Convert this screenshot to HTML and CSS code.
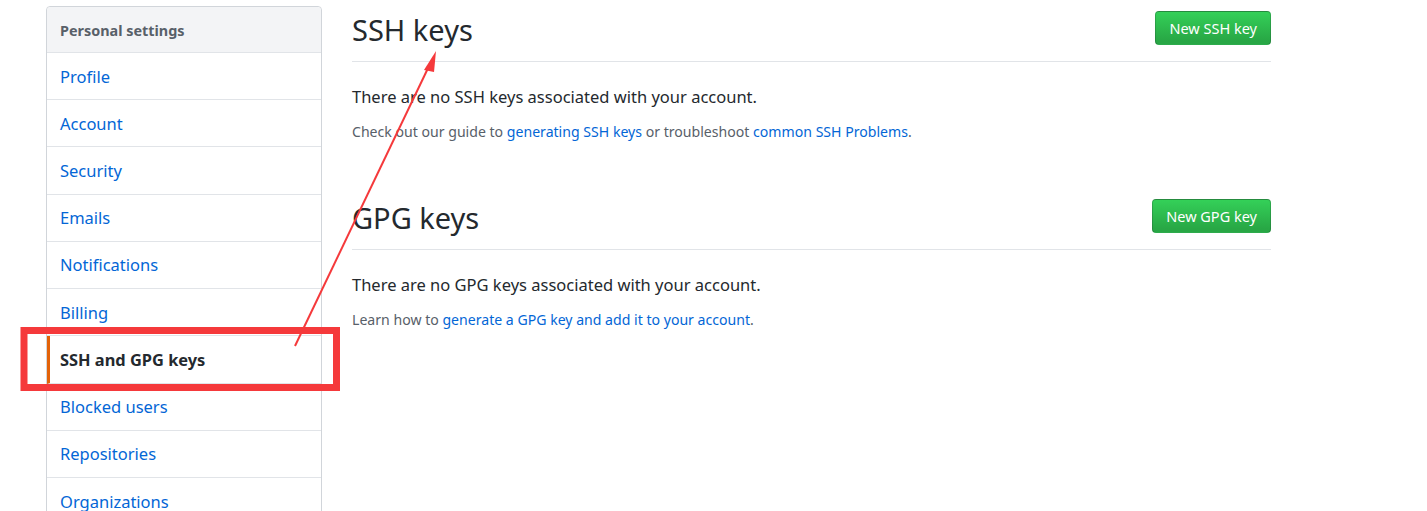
FILE: index.html
```html
<!DOCTYPE html>
<html lang="en">
<head>
<meta charset="utf-8">
<title>SSH and GPG keys</title>
<link rel="stylesheet" href="styles.css">
</head>
<body>
<div class="page">
  <nav class="menu">
    <div class="menu-heading">Personal settings</div>
    <a class="menu-item" href="#">Profile</a>
    <a class="menu-item" href="#">Account</a>
    <a class="menu-item" href="#">Security</a>
    <a class="menu-item" href="#">Emails</a>
    <a class="menu-item" href="#">Notifications</a>
    <a class="menu-item" href="#">Billing</a>
    <a class="menu-item selected" href="#">SSH and GPG keys</a>
    <a class="menu-item" href="#">Blocked users</a>
    <a class="menu-item" href="#">Repositories</a>
    <a class="menu-item" href="#">Organizations</a>
  </nav>
  <main class="content">
    <section class="keys">
      <div class="subhead">
        <h2 class="subhead-title">SSH keys</h2>
        <a class="btn" href="#">New SSH key</a>
      </div>
      <p class="blank">There are no SSH keys associated with your account.</p>
      <p class="note">Check out our guide to <a href="#">generating SSH keys</a> or troubleshoot <a href="#">common SSH Problems</a>.</p>
    </section>
    <section class="keys gpg">
      <div class="subhead">
        <h2 class="subhead-title">GPG keys</h2>
        <a class="btn" href="#">New GPG key</a>
      </div>
      <p class="blank">There are no GPG keys associated with your account.</p>
      <p class="note">Learn how to <a href="#">generate a GPG key and add it to your account</a>.</p>
    </section>
  </main>
</div>
<svg class="annotation" width="1427" height="511" viewBox="0 0 1427 511" xmlns="http://www.w3.org/2000/svg">
  <rect x="24" y="330.5" width="312.5" height="57" fill="none" stroke="#f5393b" stroke-width="7"/>
  <line x1="295" y1="346" x2="430" y2="64" stroke="#f5393b" stroke-width="2"/>
  <polygon points="436,51 424,70 434,72" fill="#f5393b"/>
</svg>
</body>
</html>
```
FILE: styles.css
```css
html, body {
  margin: 0;
  padding: 0;
  background: #fff;
  height: 511px;
  overflow: hidden;
}
body {
  font-family: "Noto Sans", "Liberation Sans", sans-serif;
  color: #24292e;
}
.page {
  display: flex;
  align-items: flex-start;
  gap: 30px;
  padding: 6px 0 0 46px;
  width: 1225px;
}
.menu {
  flex: 0 0 276px;
  box-sizing: border-box;
  border: 1px solid #d1d5da;
  border-radius: 4px;
  display: flex;
  flex-direction: column;
}
.menu-heading {
  height: 46px;
  box-sizing: border-box;
  padding: 2px 13px 0;
  display: flex;
  align-items: center;
  background: #f3f4f6;
  border-bottom: 1px solid #e1e4e8;
  border-radius: 4px 4px 0 0;
  font-size: 14.4px;
  font-weight: 700;
  color: #586069;
}
.menu-item {
  height: 47.22px;
  box-sizing: border-box;
  padding: 0 13px;
  display: flex;
  align-items: center;
  border-bottom: 1px solid #e1e4e8;
  font-size: 16.5px;
  color: #0366d6;
  text-decoration: none;
}
.menu-item.selected {
  font-weight: 700;
  font-size: 16.4px;
  color: #24292e;
  border-left: 3px solid #e36209;
  padding-left: 10px;
}
.content {
  flex: 1;
  min-width: 0;
}
.subhead {
  display: flex;
  justify-content: space-between;
  align-items: flex-start;
  border-bottom: 1px solid #e1e4e8;
  padding-bottom: 12px;
}
.subhead-title {
  margin: 0;
  font-size: 29px;
  line-height: 38px;
  font-weight: 400;
  padding-top: 5px;
}
.btn {
  margin-top: 5px;
  display: inline-block;
  box-sizing: border-box;
  height: 34px;
  line-height: 32px;
  padding: 0 13px;
  font-size: 14.5px;
  color: #fff;
  text-decoration: none;
  border: 1px solid rgba(27, 31, 35, 0.2);
  border-radius: 4px;
  background-image: linear-gradient(-180deg, #34d058 0%, #28a745 90%);
}
.blank {
  margin: 22px 0 0;
  font-size: 16.5px;
  line-height: 26px;
}
.note {
  margin: 11px 0 0;
  font-size: 14.1px;
  line-height: 22px;
  color: #586069;
}
.note a {
  color: #0366d6;
  text-decoration: none;
}
.gpg {
  margin-top: 51px;
}
.annotation {
  position: absolute;
  left: 0;
  top: 0;
  pointer-events: none;
}
```
